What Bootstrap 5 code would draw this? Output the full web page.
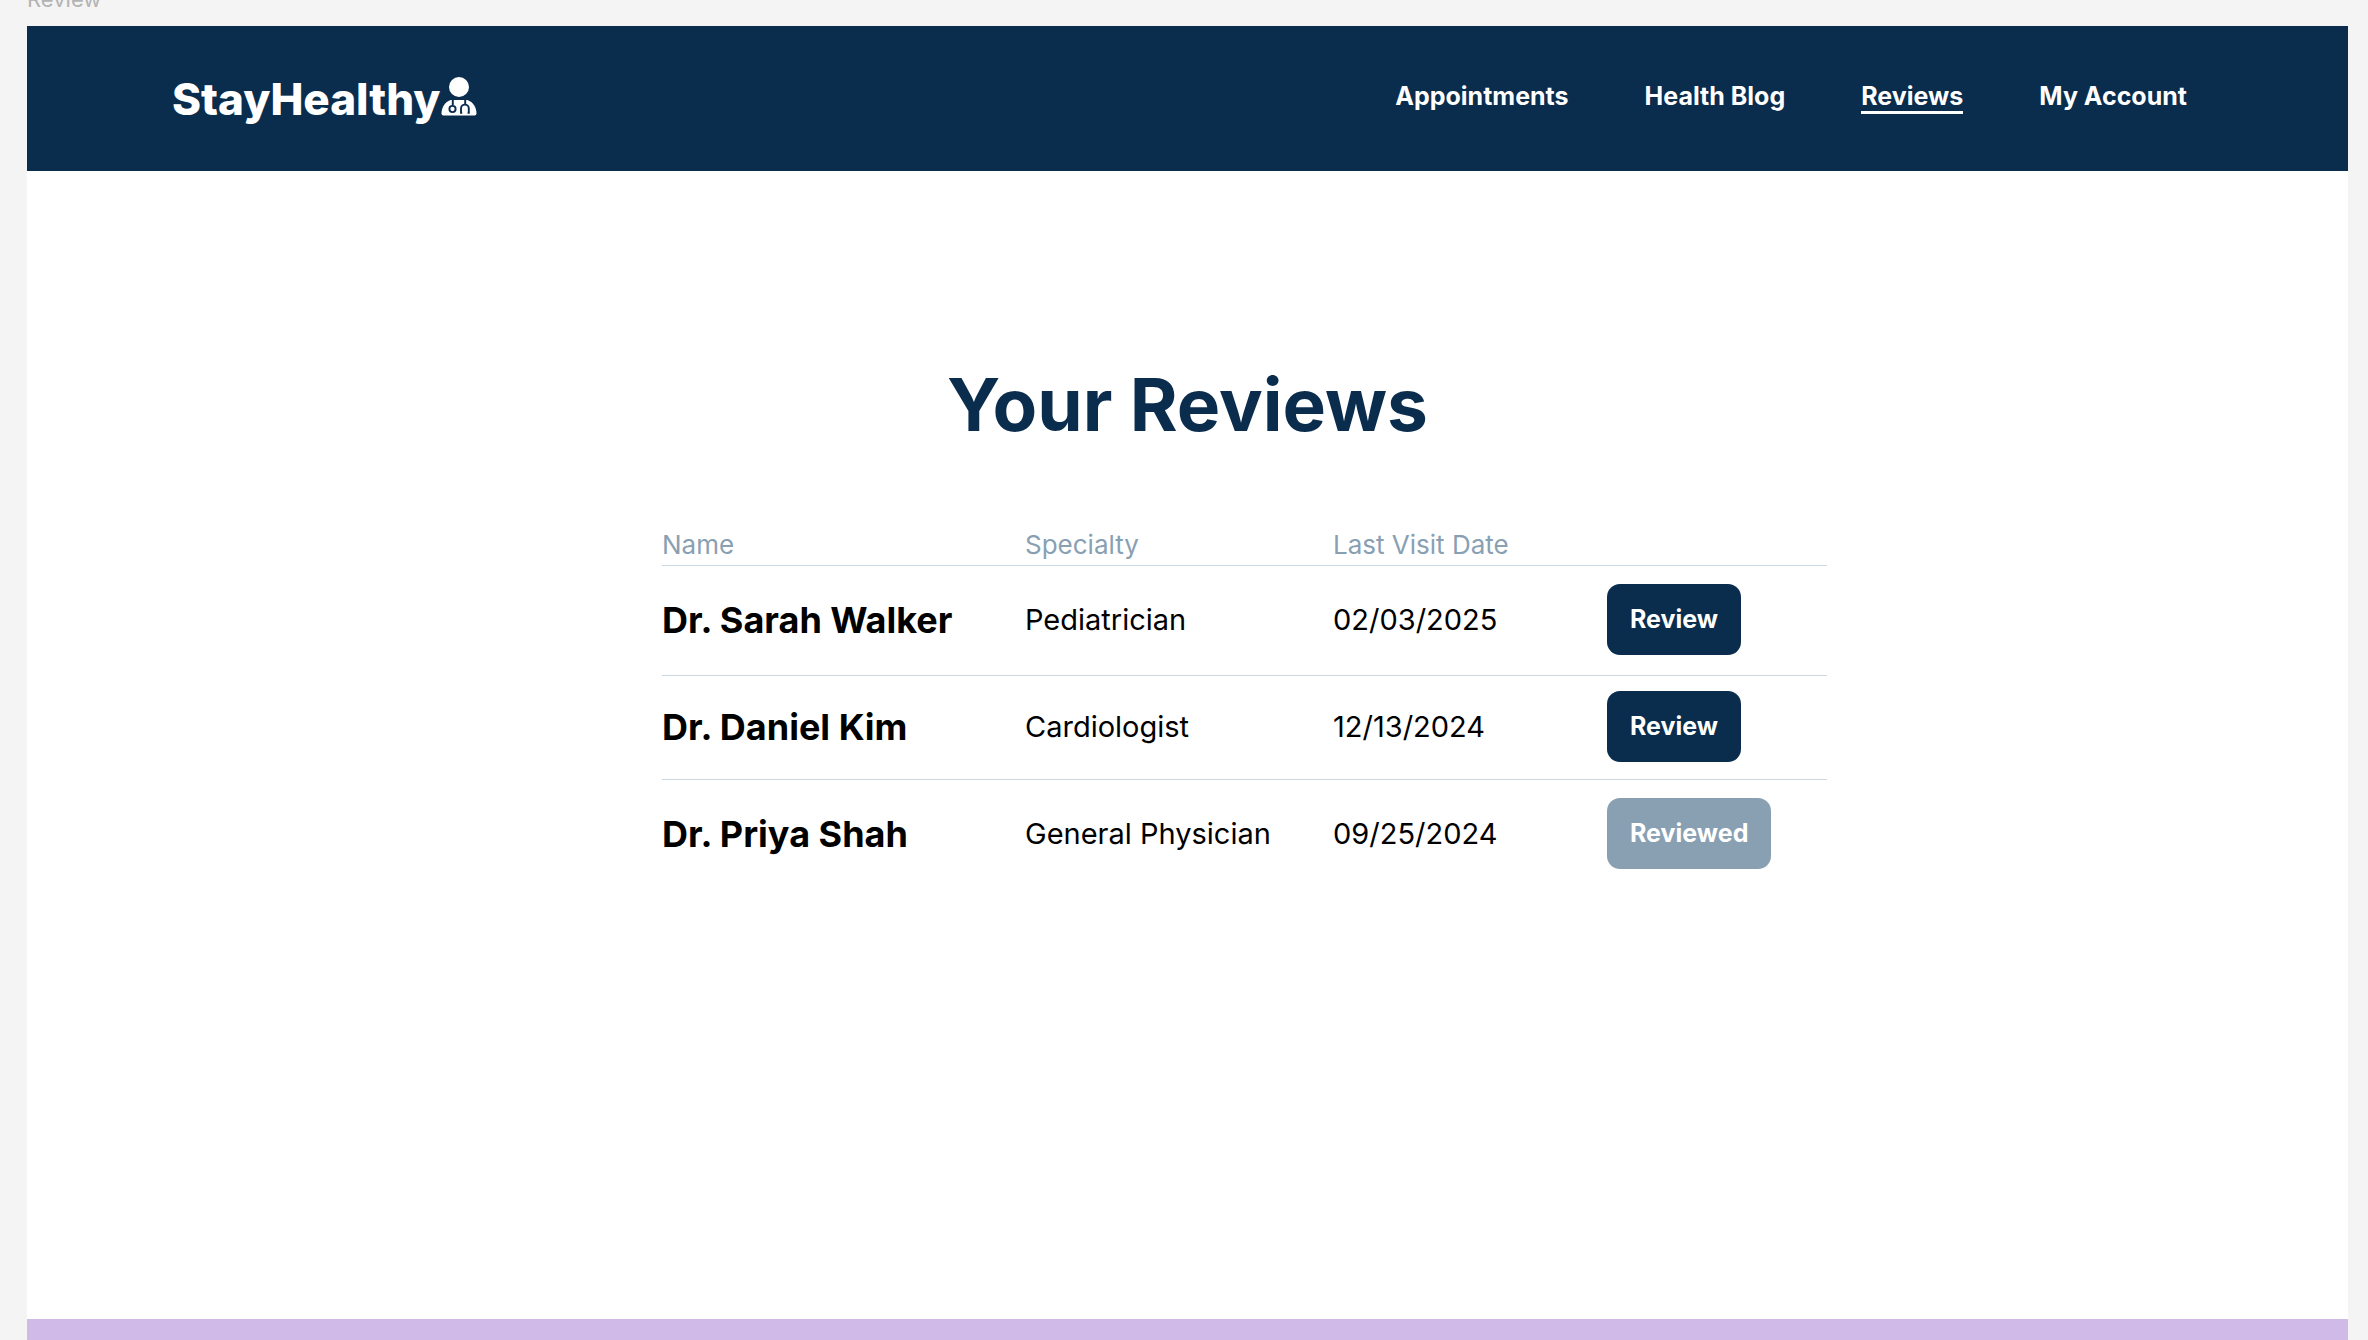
<!DOCTYPE html>
<html lang="en">
<head>
<meta charset="utf-8">
<meta name="viewport" content="width=device-width, initial-scale=1">
<title>StayHealthy – Your Reviews</title>
<link href="https://cdn.jsdelivr.net/npm/bootstrap@5.3.0/dist/css/bootstrap.min.css" rel="stylesheet">
<style>
  :root { --navy: #0a2c4d; --steel: #89a0b3; --rule: #c9d8e3; }
  body { font-family: Inter, "Liberation Sans", sans-serif; background: #f4f4f4; color: #000; }
  .board { padding: 0 20px 0 27px; }
  .board-label { font-size: 22px; line-height: 26px; margin-top: -14px; margin-bottom: 14px; color: #b3b3b3; }
  .site-bar { background: var(--navy); min-height: 145px; padding: 0 161px 0 145px; }
  .brand-link { font-size: 44px; line-height: 54px; font-weight: 800; color: #fff; text-decoration: none; }
  .brand-icon { width: 36px; height: 40px; margin: 0 0 6px 1px; }
  .menu-links { column-gap: 76px; padding-bottom: 1px; }
  .menu-links .nav-link { font-size: 25px; line-height: 29px; font-weight: 700; color: #fff; padding: 0; border-bottom: 3px solid transparent; }
  .menu-links .nav-link.active { border-color: #fff; }
  .page-title { font-size: 73px; line-height: 88px; font-weight: 700; color: var(--navy); margin-top: 190px; }
  .review-wrap { max-width: 1165px; margin: 80px 0 0 635px; }
  .review-table { table-layout: fixed; width: 100%; }
  .review-table th, .review-table td { padding: 0; vertical-align: middle; text-align: left; white-space: nowrap; }
  .review-table thead th { font-size: 26px; line-height: 32px; font-weight: 400; color: var(--steel); padding-bottom: 4px; }
  .review-table tr { border-bottom: 1px solid var(--rule); }
  .review-table tbody tr:last-child { border-bottom: 0; }
  .review-table tbody th { font-size: 36px; line-height: 44px; font-weight: 700; }
  .review-table tbody td { font-size: 29px; line-height: 36px; }
  .review-table tbody tr > * { padding: 18px 0 20px; }
  .review-table tbody tr.tight-row > * { padding: 15px 0 17px; }
  .col-name { width: 363px; } .col-spec { width: 308px; } .col-date { width: 274px; }
  .btn-review { display: block; font-size: 25px; line-height: 31px; font-weight: 700; color: #fff; background: var(--navy); border: 0; border-radius: 13px; padding: 20px 23px; }
  .btn-review:hover { background: #123f6b; color: #fff; }
  .btn-review:disabled { background: var(--steel); color: #fff; opacity: 1; }
  .foot-strip { height: 21px; background: #cfbae8; }
  @media (max-width: 1900px) {
    .site-bar { padding: 24px; }
    .menu-links { column-gap: 32px; }
    .page-title { margin-top: 80px; }
    .review-wrap { margin-left: auto; margin-right: auto; }
  }
</style>
</head>
<body>
<div class="board d-flex flex-column min-vh-100">
  <div class="board-label">Review</div>
  <header class="site-bar d-flex flex-wrap align-items-center justify-content-between">
    <a class="brand-link d-flex align-items-center" href="#">StayHealthy<svg class="brand-icon" viewBox="0 0 36 40" aria-hidden="true">
        <circle cx="18" cy="11" r="10" fill="#fff"/>
        <path d="M9.500 24H26.500C32 26 35.500 31.500 35.500 37.500Q35.500 39.500 33.500 39.500H2.500Q.5 39.500 .5 37.500C.5 31.500 4 26 9.500 24Z" fill="#fff"/>
        <g fill="none" stroke="#0a2c4d" stroke-width="1.900">
          <path d="M11.800 23.500V29M24.200 23.500V29"/>
          <circle cx="11.500" cy="33" r="3.100"/>
          <path d="M21.200 36.800H20V32.500A3.900 3.900 0 0 1 27.800 32.500V36.800H26.600"/>
        </g>
      </svg></a>
    <nav>
      <ul class="menu-links nav">
        <li class="nav-item"><a class="nav-link" href="#">Appointments</a></li>
        <li class="nav-item"><a class="nav-link" href="#">Health Blog</a></li>
        <li class="nav-item"><a class="nav-link active" aria-current="page" href="#">Reviews</a></li>
        <li class="nav-item"><a class="nav-link" href="#">My Account</a></li>
      </ul>
    </nav>
  </header>
  <main class="bg-white flex-grow-1">
    <h1 class="page-title text-center mb-0">Your Reviews</h1>
    <div class="review-wrap">
      <table class="review-table">
        <colgroup><col class="col-name"><col class="col-spec"><col class="col-date"><col></colgroup>
        <thead>
          <tr><th scope="col">Name</th><th scope="col">Specialty</th><th scope="col">Last Visit Date</th><th scope="col" aria-label="Action"></th></tr>
        </thead>
        <tbody>
          <tr><th scope="row">Dr. Sarah Walker</th><td>Pediatrician</td><td>02/03/2025</td><td><button type="button" class="btn btn-review">Review</button></td></tr>
          <tr class="tight-row"><th scope="row">Dr. Daniel Kim</th><td>Cardiologist</td><td>12/13/2024</td><td><button type="button" class="btn btn-review">Review</button></td></tr>
          <tr><th scope="row">Dr. Priya Shah</th><td>General Physician</td><td>09/25/2024</td><td><button type="button" class="btn btn-review" disabled>Reviewed</button></td></tr>
        </tbody>
      </table>
    </div>
  </main>
  <footer class="foot-strip"></footer>
</div>
<script src="https://cdn.jsdelivr.net/npm/bootstrap@5.3.0/dist/js/bootstrap.bundle.min.js"></script>
</body>
</html>
